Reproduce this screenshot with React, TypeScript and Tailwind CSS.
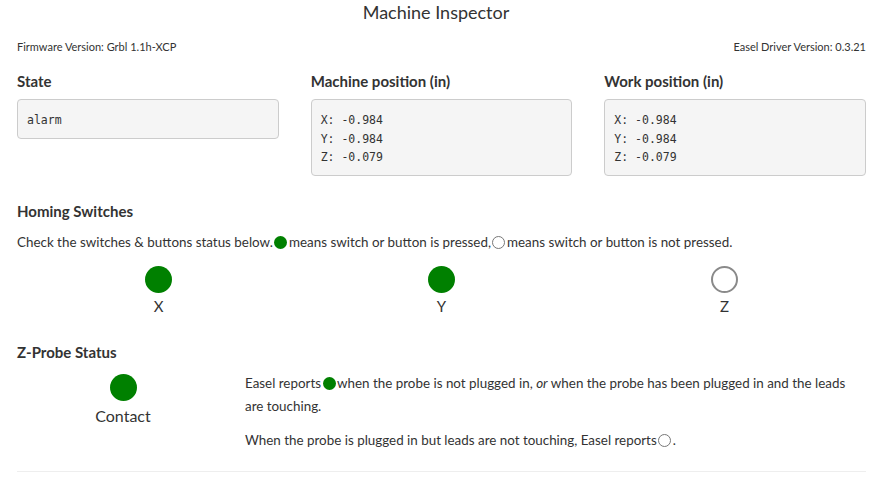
function Dot({ filled, size = 'big' }: { filled: boolean; size?: 'big' | 'small' }) {
  const dims = size === 'big' ? 'w-[27px] h-[27px]' : 'w-[13px] h-[13px] align-[-2px] mx-[1.5px]';
  const look = filled
    ? 'bg-[#008000]'
    : size === 'big'
      ? 'border-[2.5px] border-[#8a8a8a] bg-white'
      : 'border-[1.5px] border-[#777] bg-white';
  return <span className={`inline-block rounded-full ${dims} ${look}`} />;
}

function PositionBox({ title, lines }: { title: string; lines: string[] }) {
  return (
    <div>
      <h3 className="text-[15px] font-bold leading-[20px] text-[#333] mb-[8px]">{title}</h3>
      <pre className="bg-[#f5f5f5] border border-[#ccc] rounded-[4px] px-[9px] pt-[11px] pb-[8px] text-[11.5px] leading-[18.5px] text-[#333] font-['DejaVu_Sans_Mono',monospace]">
        {lines.join('\n')}
      </pre>
    </div>
  );
}

export default function App() {
  const switches = [
    { axis: 'X', pressed: true },
    { axis: 'Y', pressed: true },
    { axis: 'Z', pressed: false },
  ];

  return (
    <div className="w-[872px] h-[485px] bg-white text-[#333] font-['Lato',sans-serif] overflow-hidden">
      <div className="h-[24px] flex items-center justify-center text-[18px] text-[#333]">Machine Inspector</div>

      <div className="pl-[17px] pr-[6px]">
        <div className="flex justify-between text-[11px] leading-[14px] mt-[16px]">
          <span>Firmware Version: Grbl 1.1h-XCP</span>
          <span>Easel Driver Version: 0.3.21</span>
        </div>

        <div className="grid grid-cols-3 gap-[32px] mt-[17px]">
          <PositionBox title="State" lines={['alarm']} />
          <PositionBox title="Machine position (in)" lines={['X: -0.984', 'Y: -0.984', 'Z: -0.079']} />
          <PositionBox title="Work position (in)" lines={['X: -0.984', 'Y: -0.984', 'Z: -0.079']} />
        </div>

        {/* Homing switches */}
        <h3 className="text-[15px] font-bold leading-[20px] mt-[25px]">Homing Switches</h3>
        <p className="text-[13.4px] leading-[20px] mt-[11px]">
          Check the switches &amp; buttons status below.
          <Dot filled size="small" />
          means switch or button is pressed,
          <Dot filled={false} size="small" />
          means switch or button is not pressed.
        </p>
        <div className="grid grid-cols-3 mt-[14px]">
          {switches.map(s => (
            <div key={s.axis} className="flex flex-col items-center">
              <Dot filled={s.pressed} />
              <span className="text-[15px] leading-[18px] mt-[4px]">{s.axis}</span>
            </div>
          ))}
        </div>

        {/* Z-probe */}
        <h3 className="text-[15px] font-bold leading-[20px] mt-[27px]">Z-Probe Status</h3>
        <div className="grid grid-cols-[212px_1fr] mt-[10px]">
          <div className="flex flex-col items-center pt-[2px]">
            <Dot filled />
            <span className="text-[16px] leading-[20px] mt-[5px]">Contact</span>
          </div>
          <div className="pl-[16px] text-[13.4px] leading-[23px]">
            <p>
              Easel reports
              <Dot filled size="small" />
              when the probe is not plugged in, <em>or</em> when the probe has been plugged in and the leads are touching.
            </p>
            <p className="mt-[11px]">
              When the probe is plugged in but leads are not touching, Easel reports
              <Dot filled={false} size="small" />.
            </p>
          </div>
        </div>

        <hr className="border-t border-[#eee] mt-[19px]" />
      </div>
    </div>
  );
}
